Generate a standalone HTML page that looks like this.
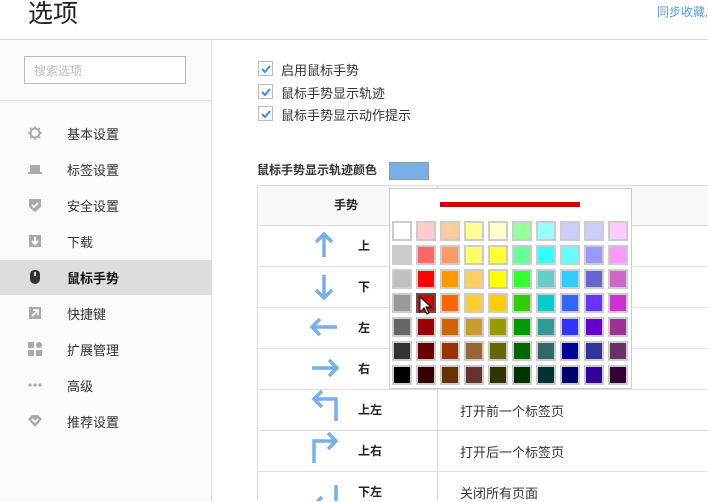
<!DOCTYPE html>
<html><head><meta charset="utf-8"><style>
*{margin:0;padding:0;box-sizing:border-box}
body{width:708px;height:501px;overflow:hidden;background:#fff;font-family:"Liberation Sans","Noto Sans CJK SC",sans-serif;position:relative;color:#333}
.a{position:absolute}
.t{font-size:13px;white-space:nowrap}
.cb{position:absolute;left:258px;width:15px;height:15px;border:1px solid #bbb;background:#fff}
.cb svg{position:absolute;left:1px;top:1px}
.nav{position:absolute;left:0;width:212px;height:36px}
.nav span{position:absolute;left:67px;top:9px;font-size:13px;color:#333}
.ic{position:absolute;left:28px;top:11px;width:14px;height:14px}
.hl{position:absolute;left:257px;right:0;height:1px;background:#ddd}
.cell{position:absolute;width:20px;height:20px;border:2px solid #ccc}
.rt{position:absolute;left:460px;font-size:13px;color:#333}
.gt{position:absolute;left:358px;font-size:12px;color:#222;font-weight:bold}
</style></head><body>
<div class="a" style="left:28px;top:-6px;font-size:25px;color:#222">选项</div>
<div class="a" style="left:657px;top:3px;font-size:12px;color:#5b9be0;white-space:nowrap">同步收藏,</div>
<div class="a" style="left:0;top:39px;width:708px;height:1px;background:#d8d8d8"></div>
<div class="a" style="left:0;top:40px;width:212px;height:461px;background:#fafafa;border-right:1px solid #ddd"></div>
<div class="a" style="left:24px;top:56px;width:162px;height:28px;border:1px solid #bbb;background:#fff"><span style="position:absolute;left:9px;top:5px;font-size:12px;color:#bbb">搜索选项</span></div>
<div class="a" style="left:0;top:100px;width:212px;height:1px;background:#e0e0e0"></div>

<div class="nav" style="top:115px"><svg class="ic" viewBox="0 0 14 14"><circle cx="7" cy="7" r="4.5" fill="none" stroke="#aaa" stroke-width="2"/><path d="M7 0v3M7 11v3M0 7h3M11 7h3M2 2l2 2M10 10l2 2M2 12l2-2M10 4l2-2" stroke="#aaa" stroke-width="1.6"/></svg><span>基本设置</span></div>
<div class="nav" style="top:151px"><svg class="ic" viewBox="0 0 14 14"><rect x="2" y="3" width="10" height="7" fill="#aaa"/><rect x="0" y="10" width="14" height="2" fill="#aaa"/></svg><span>标签设置</span></div>
<div class="nav" style="top:187px"><svg class="ic" viewBox="0 0 14 14"><path d="M1 1h12v8l-6 5-6-5z" fill="#aaa"/><path d="M4 7l2 2 4-4" stroke="#fff" stroke-width="1.6" fill="none"/></svg><span>安全设置</span></div>
<div class="nav" style="top:223px"><svg class="ic" viewBox="0 0 14 14"><rect x="1" y="1" width="12" height="12" fill="#aaa"/><path d="M7 3v7M4 7l3 3 3-3" stroke="#fff" stroke-width="2" fill="none"/></svg><span>下载</span></div>
<div class="nav" style="top:260px;height:35px;background:#ddd"><svg class="ic" viewBox="0 0 14 14" style="top:10px"><path d="M2 4a5 4 0 0 1 10 0v5a5 5 0 0 1-10 0z" fill="#333"/><rect x="6.2" y="2" width="1.6" height="4" fill="#fff"/></svg><span style="color:#111;font-weight:bold;top:8px">鼠标手势</span></div>
<div class="nav" style="top:295px"><svg class="ic" viewBox="0 0 14 14"><rect x="1" y="1" width="12" height="12" fill="#aaa"/><path d="M4 10l6-6M5 4h5v5" stroke="#fff" stroke-width="1.6" fill="none"/></svg><span>快捷键</span></div>
<div class="nav" style="top:331px"><svg class="ic" viewBox="0 0 14 14"><rect x="0" y="0" width="6" height="6" fill="#aaa"/><circle cx="11" cy="3" r="3" fill="#aaa"/><rect x="0" y="8" width="6" height="6" fill="#aaa"/><rect x="8" y="8" width="6" height="6" fill="#aaa"/></svg><span>扩展管理</span></div>
<div class="nav" style="top:367px"><svg class="ic" viewBox="0 0 14 14"><circle cx="2" cy="7" r="1.6" fill="#aaa"/><circle cx="7" cy="7" r="1.6" fill="#aaa"/><circle cx="12" cy="7" r="1.6" fill="#aaa"/></svg><span>高级</span></div>
<div class="nav" style="top:403px"><svg class="ic" viewBox="0 0 14 14"><path d="M0 5l4-4h6l4 4-7 8z" fill="#aaa"/><path d="M4 5l3 3 3-3" stroke="#fff" stroke-width="1.6" fill="none"/></svg><span>推荐设置</span></div>

<div class="cb" style="top:61px"><svg width="12" height="12"><path d="M2 6l3 3 5-6" stroke="#3a8ee6" stroke-width="2" fill="none"/></svg></div>
<div class="cb" style="top:84px"><svg width="12" height="12"><path d="M2 6l3 3 5-6" stroke="#3a8ee6" stroke-width="2" fill="none"/></svg></div>
<div class="cb" style="top:106px"><svg width="12" height="12"><path d="M2 6l3 3 5-6" stroke="#3a8ee6" stroke-width="2" fill="none"/></svg></div>
<div class="a t" style="left:281px;top:60px">启用鼠标手势</div>
<div class="a t" style="left:281px;top:83px">鼠标手势显示轨迹</div>
<div class="a t" style="left:281px;top:105px">鼠标手势显示动作提示</div>

<div class="a t" style="left:257px;top:161px;font-weight:bold;color:#333;font-size:12px">鼠标手势显示轨迹颜色</div>
<div class="a" style="left:389px;top:162px;width:40px;height:18px;background:#7aaee8;border:1px solid #999"></div>

<div class="a" style="left:257px;top:185px;width:451px;height:40px;background:#f8f8f8"></div>
<div class="hl" style="top:185px"></div>
<div class="a" style="left:257px;top:185px;width:1px;height:316px;background:#ddd"></div>
<div class="a" style="left:437px;top:185px;width:1px;height:316px;background:#ddd"></div>
<div class="a" style="left:334px;top:196px;font-size:12px;font-weight:bold;color:#222">手势</div>
<div class="hl" style="top:225px"></div><div class="hl" style="top:266px"></div><div class="hl" style="top:307px"></div><div class="hl" style="top:348px"></div><div class="hl" style="top:389px"></div><div class="hl" style="top:430px"></div><div class="hl" style="top:471px"></div>

<svg class="a" style="left:300px;top:225px" width="50" height="276" fill="none" stroke="#7aaee8" stroke-width="3.5">
<path d="M24 9v23M16 17l8-8 8 8"/>
<path d="M24 50v23M16 65l8 8 8-8"/>
<path d="M12 102h25M20 94l-8 8 8 8"/>
<path d="M12 143h25M29 135l8 8-8 8"/>
<path d="M14 174h22v22M22 166l-8 8 8 8"/>
<path d="M14 238v-22h22M28 208l8 8-8 8"/>
<path d="M36 260v20H14M22 272l-8 8 8 8"/>
</svg>
<div class="gt" style="top:237px">上</div>
<div class="gt" style="top:278px">下</div>
<div class="gt" style="top:319px">左</div>
<div class="gt" style="top:360px">右</div>
<div class="gt" style="top:401px">上左</div>
<div class="gt" style="top:442px">上右</div>
<div class="gt" style="top:483px">下左</div>
<div class="rt" style="top:401px">打开前一个标签页</div>
<div class="rt" style="top:442px">打开后一个标签页</div>
<div class="rt" style="top:483px">关闭所有页面</div>

<div class="a" style="left:389px;top:188px;width:243px;height:201px;background:#fff;border:1px solid #ccc"></div>
<div class="a" style="left:440px;top:202px;width:140px;height:5px;background:#cc0000"></div>
<div id="g"></div>
<script>
var c=[["#fff","#fcc","#fc9","#ff9","#ffc","#9f9","#9ff","#ccf","#ccf","#fcf"],
["#ccc","#f66","#f96","#ff6","#ff3","#6f9","#3ff","#6ff","#99f","#f9f"],
["#c0c0c0","#f00","#f90","#fc6","#ff0","#3f3","#6cc","#3cf","#66c","#c6c"],
["#999","#c00","#f60","#fc3","#fc0","#3c0","#0cc","#36f","#63f","#c3c"],
["#666","#900","#c60","#c93","#990","#090","#399","#33f","#60c","#939"],
["#333","#600","#930","#963","#660","#060","#366","#009","#339","#636"],
["#000","#300","#630","#633","#330","#030","#033","#006","#309","#303"]];
var h="";for(var r=0;r<7;r++)for(var k=0;k<10;k++)h+='<div class="cell" style="left:'+(392+k*24)+'px;top:'+(221+r*24)+'px;background:'+c[r][k]+(r==3&&k==1?';border-color:#555':'')+'"></div>';
document.getElementById("g").innerHTML=h;
</script>
<svg class="a" style="left:419px;top:296px" width="14" height="20"><path d="M1 1v15l4-4 3 6 2-1-3-6h5z" fill="#fff" stroke="#000" stroke-width="1"/></svg>
</body></html>
